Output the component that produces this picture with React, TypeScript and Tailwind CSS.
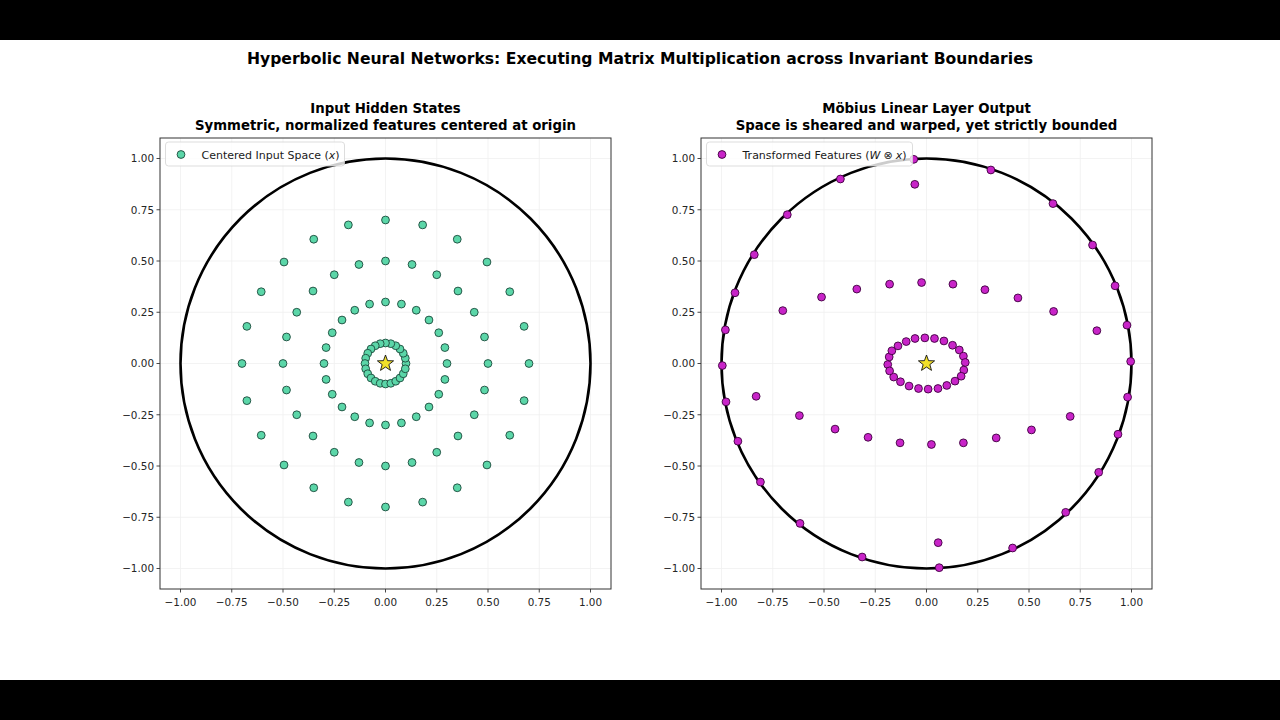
import type { ReactNode } from "react"

type Pt = [number, number]

const TICKS = [-1, -0.75, -0.5, -0.25, 0, 0.25, 0.5, 0.75, 1]
const S = 205
const AX = 40
const AY = 4
const SIDE = 451

const px = (v: number) => AX + (v + 1.1) * S
const py = (v: number) => AY + (1.1 - v) * S
const fmt = (v: number) => (v < 0 ? "\u2212" : "") + Math.abs(v).toFixed(2)

// input features: 4 rings, 24 angles each
const inputPts: Pt[] = []
for (const r of [0.1, 0.3, 0.5, 0.7]) {
  for (let k = 0; k < 24; k++) {
    const a = (k * Math.PI) / 12
    inputPts.push([r * Math.cos(a), r * Math.sin(a)])
  }
}

// transformed features: read off the output, point symmetric about origin
const half: Pt[] = [
  [-0.189, -0.005], [-0.182, 0.032], [-0.169, 0.062], [-0.139, 0.086],
  [-0.099, 0.107], [-0.056, 0.122], [-0.008, 0.125], [0.039, 0.122],
  [0.085, 0.11], [0.127, 0.089], [0.16, 0.066], [0.18, 0.036],
  [-0.701, 0.258], [-0.512, 0.324], [-0.34, 0.363], [-0.18, 0.387],
  [-0.024, 0.395], [0.129, 0.387], [0.285, 0.36], [0.446, 0.32],
  [0.62, 0.254], [0.831, 0.16],
  [-0.057, 0.874],
  [-0.062, 0.996], [-0.42, 0.9], [-0.679, 0.726], [-0.84, 0.531],
  [-0.934, 0.345], [-0.981, 0.164], [-0.996, -0.01], [-0.978, -0.187],
  [-0.92, -0.379], [-0.81, -0.578], [-0.617, -0.78], [-0.314, -0.944],
]
const outputPts: Pt[] = [...half, ...half.map(([x, y]) => [-x, -y] as Pt)]

const star = (cx: number, cy: number, R: number, r: number) => {
  const pts: string[] = []
  for (let i = 0; i < 10; i++) {
    const rad = i % 2 === 0 ? R : r
    const a = -Math.PI / 2 + (i * Math.PI) / 5
    pts.push(`${(cx + rad * Math.cos(a)).toFixed(2)},${(cy + rad * Math.sin(a)).toFixed(2)}`)
  }
  return pts.join(" ")
}

const Chart = ({
  title,
  subtitle,
  points,
  fill,
  edge,
  label,
  legendW,
}: {
  title: string
  subtitle: string
  points: Pt[]
  fill: string
  edge: string
  label: ReactNode
  legendW: number
}) => {
  return (
    <div className="flex w-[500px] flex-col">
      <div className="ml-[40px] w-[451px] text-center text-[13.3px] font-bold leading-[17px]">
        <div>{title}</div>
        <div>{subtitle}</div>
      </div>
      <svg width={500} height={480} className="block" fontFamily="'DejaVu Sans', sans-serif">
        <rect x={AX} y={AY} width={SIDE} height={SIDE} fill="#fff" />
        {/* grid */}
        {TICKS.map((t) => (
          <g key={"g" + t} stroke="#f0f0f0" strokeWidth={0.8}>
            <line x1={px(t)} y1={AY} x2={px(t)} y2={AY + SIDE} />
            <line x1={AX} y1={py(t)} x2={AX + SIDE} y2={py(t)} />
          </g>
        ))}
        {/* boundary */}
        <circle cx={px(0)} cy={py(0)} r={S} fill="none" stroke="#000" strokeWidth={2.6} />
        {points.map(([x, y], i) => (
          <circle key={i} cx={px(x)} cy={py(y)} r={3.9} fill={fill} stroke={edge} strokeWidth={0.9} />
        ))}
        <polygon points={star(px(0), py(0), 8.5, 3.5)} fill="#f2e02a" stroke="#111" strokeWidth={0.9} />
        {/* spines */}
        <rect x={AX} y={AY} width={SIDE} height={SIDE} fill="none" stroke="#333" strokeWidth={1} />
        {/* ticks */}
        {TICKS.map((t) => (
          <g key={"t" + t} fill="#262626" fontSize={10.4}>
            <line x1={px(t)} y1={AY + SIDE} x2={px(t)} y2={AY + SIDE + 3.5} stroke="#333" strokeWidth={0.9} />
            <text x={px(t)} y={AY + SIDE + 16.5} textAnchor="middle">
              {fmt(t)}
            </text>
            <line x1={AX - 3.5} y1={py(t)} x2={AX} y2={py(t)} stroke="#333" strokeWidth={0.9} />
            <text x={AX - 6} y={py(t) + 3.8} textAnchor="end">
              {fmt(t)}
            </text>
          </g>
        ))}
        {/* legend */}
        <rect x={AX + 5.5} y={AY + 4} width={legendW} height={24} rx={3} fill="#fff" fillOpacity={0.8} stroke="#d4d4d4" strokeWidth={0.8} />
        <circle cx={AX + 21} cy={AY + 16.5} r={3.9} fill={fill} stroke={edge} strokeWidth={0.9} />
        <text x={AX + 41.5} y={AY + 20.5} fontSize={11} fill="#1a1a1a">
          {label}
        </text>
      </svg>
    </div>
  )
}

export default function App() {
  return (
    <div className="flex h-[720px] w-[1280px] flex-col bg-white font-['DejaVu_Sans',sans-serif] text-black">
      <div className="h-10 shrink-0 bg-black" />
      <div className="flex flex-1 flex-col items-center">
        <h1 className="mt-[10px] text-[15.6px] font-bold leading-[18px]">
          Hyperbolic Neural Networks: Executing Matrix Multiplication across Invariant Boundaries
        </h1>
        <div className="mt-[32px] flex w-full gap-[41px] pl-[120px]">
          <Chart
            title="Input Hidden States"
            subtitle="Symmetric, normalized features centered at origin"
            points={inputPts}
            fill="#5bd6a8"
            edge="#1d4a3c"
            legendW={179}
            label={
              <>
                Centered Input Space (<tspan fontStyle="italic">x</tspan>)
              </>
            }
          />
          <Chart
            title="Möbius Linear Layer Output"
            subtitle="Space is sheared and warped, yet strictly bounded"
            points={outputPts}
            fill="#c824c8"
            edge="#3d003d"
            legendW={206}
            label={
              <>
                Transformed Features (<tspan fontStyle="italic">W</tspan>
                <tspan dx={3}>⊗</tspan>
                <tspan dx={3} fontStyle="italic">x</tspan>)
              </>
            }
          />
        </div>
      </div>
      <div className="h-10 shrink-0 bg-black" />
    </div>
  )
}
